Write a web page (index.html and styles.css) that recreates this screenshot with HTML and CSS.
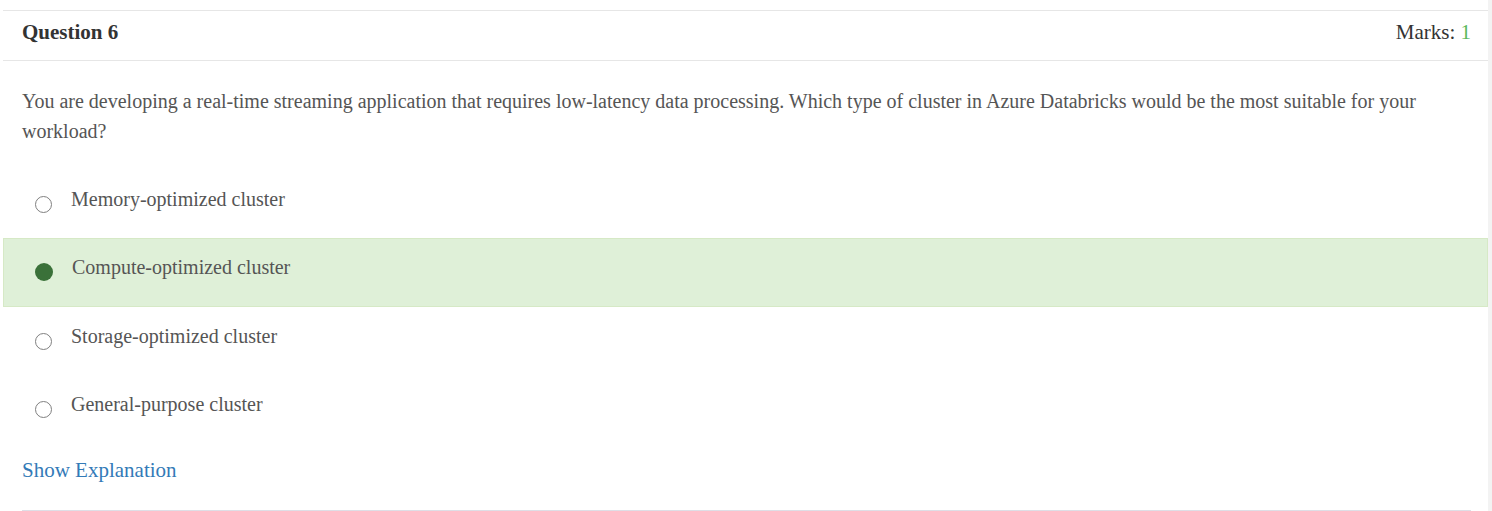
FILE: index.html
```html
<!DOCTYPE html>
<html lang="en">
<head>
<meta charset="utf-8">
<title>Question 6</title>
<link rel="stylesheet" href="styles.css">
</head>
<body>
<div class="page">
  <div class="panel">
    <div class="panel-head">
      <span class="q-title">Question 6</span>
      <span class="marks">Marks: <span class="marks-val">1</span></span>
    </div>
    <div class="panel-body">
      <p class="q-text">You are developing a real-time streaming application that requires low-latency data processing. Which type of cluster in Azure Databricks would be the most suitable for your workload?</p>
      <ul class="options">
        <li class="opt"><span class="radio"></span><span class="opt-text">Memory-optimized cluster</span></li>
        <li class="opt opt-correct"><span class="radio radio-on"></span><span class="opt-text">Compute-optimized cluster</span></li>
        <li class="opt"><span class="radio"></span><span class="opt-text">Storage-optimized cluster</span></li>
        <li class="opt"><span class="radio"></span><span class="opt-text">General-purpose cluster</span></li>
      </ul>
      <a class="explain" href="#">Show Explanation</a>
      <div class="divider"></div>
    </div>
  </div>
  <div class="side"></div>
</div>
</body>
</html>
```

FILE: styles.css
```css
html, body {
  margin: 0;
  padding: 0;
  background: #ffffff;
}
body {
  font-family: "Liberation Serif", "Times New Roman", serif;
  color: #555555;
}
.page {
  display: flex;
  min-height: 511px;
}
.panel {
  width: 1485px;
  margin-left: 3px;
  margin-top: 10px;
  border-top: 1px solid #e6e6e6;
}
.side {
  flex: 1;
  background: #f3f3f3;
}
.panel-head {
  display: flex;
  justify-content: space-between;
  align-items: center;
  height: 43px;
  padding: 0 17px 6px 19px;
  border-bottom: 1px solid #e6e6e6;
}
.q-title {
  font-weight: bold;
  font-size: 21px;
  color: #333333;
}
.marks {
  font-size: 21px;
  color: #333333;
}
.marks-val {
  color: #5cb85c;
}
.panel-body {
  padding: 26px 0 0;
}
.q-text {
  margin: 0 19px;
  font-size: 20px;
  line-height: 29.5px;
}
.options {
  list-style: none;
  margin: 24px 0 0;
  padding: 0;
}
.opt {
  display: flex;
  align-items: flex-start;
  padding: 16px 0 25px 32px;
  font-size: 20px;
  line-height: 27px;
}
.opt-correct {
  background: #dff0d8;
  border: 1px solid #d6e9c6;
  padding: 15px 0 25px 31px;
}
.radio {
  box-sizing: border-box;
  flex: none;
  width: 17px;
  height: 17px;
  margin-top: 10px;
  margin-right: 19px;
  border: 1.5px solid #808080;
  border-radius: 50%;
  background: #ffffff;
}
.radio-on {
  width: 18px;
  height: 18px;
  margin-top: 9px;
  margin-right: 19px;
  border: none;
  background: #3a7139;
}
.explain {
  display: block;
  margin: 13px 19px 0;
  font-size: 21px;
  line-height: 28px;
  color: #337ab7;
  text-decoration: none;
}
.divider {
  margin: 26px 17px 0 19px;
  border-top: 1px solid #dedee6;
}
```
